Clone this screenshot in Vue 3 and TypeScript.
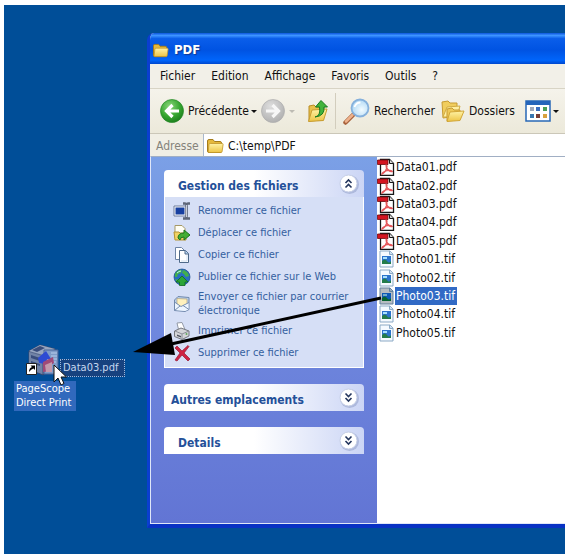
<script setup lang="ts">
import { ref } from 'vue'

interface Task { icon: string; label: string }
interface FileEntry { name: string; icon: string }

const menus: string[] = ['Fichier', 'Edition', 'Affichage', 'Favoris', 'Outils', '?']
const tasks: Task[] = [
  { icon: 'rename', label: 'Renommer ce fichier' },
  { icon: 'move', label: 'Déplacer ce fichier' },
  { icon: 'copy', label: 'Copier ce fichier' },
  { icon: 'publish', label: 'Publier ce fichier sur le Web' },
  { icon: 'mail', label: 'Envoyer ce fichier par courrier électronique' },
  { icon: 'print', label: 'Imprimer ce fichier' },
  { icon: 'delete', label: 'Supprimer ce fichier' },
]
const files: FileEntry[] = [
  ...[1, 2, 3, 4, 5].map((n) => ({ name: `Data0${n}.pdf`, icon: 'pdf' })),
  ...[1, 2, 3, 4, 5].map((n) => ({ name: `Photo0${n}.tif`, icon: 'tif' })),
]
const selected = ref('Photo03.tif')
const address = ref('C:\\temp\\PDF')
const tasksOpen = ref(true)
</script>

<template>
  <main class="page">
    <svg class="defs" aria-hidden="true">
      <defs>
        <linearGradient id="folderFill" x1="0" y1="0" x2="0" y2="1">
          <stop offset="0" stop-color="#fff3a6" /><stop offset="1" stop-color="#edc445" />
        </linearGradient>
        <radialGradient id="greenBall" cx=".4" cy=".3" r=".75">
          <stop offset="0" stop-color="#8bd67a" /><stop offset=".6" stop-color="#35a52f" /><stop offset="1" stop-color="#1a7a1c" />
        </radialGradient>
        <radialGradient id="greyBall" cx=".4" cy=".3" r=".75">
          <stop offset="0" stop-color="#dedede" /><stop offset="1" stop-color="#aeaeae" />
        </radialGradient>
        <radialGradient id="lens" cx=".6" cy=".6" r=".7">
          <stop offset="0" stop-color="#f2fbff" /><stop offset="1" stop-color="#a5d3f3" />
        </radialGradient>
      </defs>
      <symbol id="folder" viewBox="0 0 18 16">
        <path d="M1.500 3q0-1.500 1.500-1.500h4l1.500 2h5.500q1.500 0 1.500 1.500v8q0 1.500-1.500 1.500h-11q-1.500 0-1.500-1.500z" fill="#e5b93c" stroke="#a47c1b" />
        <path d="M3 6.500q.2-1 1.200-1h12q1 0 .9 1l-1 7q-.1 1-1.200 1H3.200q-1 0-1-1z" fill="url(#folderFill)" stroke="#c2962a" stroke-width=".8" />
      </symbol>
      <symbol id="back" viewBox="0 0 24 24">
        <circle cx="12" cy="12" r="11.500" fill="url(#greenBall)" stroke="#288a28" stroke-width=".7" />
        <path d="M19 12H7M12.500 6 6.500 12l6 6" fill="none" stroke="#fff" stroke-width="3.200" />
      </symbol>
      <symbol id="forward" viewBox="0 0 24 24">
        <circle cx="12" cy="12" r="11.500" fill="url(#greyBall)" stroke="#adadad" stroke-width=".7" />
        <path d="M5 12h12M11.500 6l6 6-6 6" fill="none" stroke="#f7f7f7" stroke-width="3.200" />
      </symbol>
      <symbol id="up" viewBox="0 0 22 24">
        <path d="M2 7l5-1 2 2 8 0-1 13-14 1z" fill="#e8c04c" stroke="#b98d25" />
        <path d="M1.500 22.500 5 11l15-1-3.500 11.500z" fill="url(#folderFill)" stroke="#c79c31" />
        <path d="M8 18q6-1 4.500-10H8.500L14 1.500 20.500 8H17q1 9-9 10z" fill="#42b33b" stroke="#187b20" />
      </symbol>
      <symbol id="search" viewBox="0 0 27 27">
        <path d="M2.500 24.500 10 17" stroke="#a8623c" stroke-width="4.500" stroke-linecap="round" />
        <path d="M3 23.500 9.500 17" stroke="#eeb28c" stroke-width="2.500" stroke-linecap="round" />
        <circle cx="17" cy="10" r="8.500" fill="url(#lens)" stroke="#86b1dc" stroke-width="1.800" />
        <path d="M11.500 9q1.500-4.500 6-4.500" fill="none" stroke="#fff" stroke-width="1.800" />
      </symbol>
      <symbol id="folders" viewBox="0 0 24 24">
        <path d="M1 3l6-1 2 2h7v13L2 19z" fill="#f0cd5e" stroke="#c69b32" />
        <path d="M2 18 6 8l13-1-3 11z" fill="#fff0a2" stroke="#d1ab43" />
        <path d="M6 10l5-1 2 2h6v9L6 22z" fill="#eec957" stroke="#c69b32" />
        <path d="M6 22.500 9 13l14-1-4 9.500z" fill="url(#folderFill)" stroke="#d1a638" />
      </symbol>
      <symbol id="views" viewBox="0 0 26 22">
        <rect x="1" y="1" width="24" height="20" fill="#fff" stroke="#2868b6" stroke-width="1.500" />
        <path d="M1 1h24v4H1z" fill="#2565ba" />
        <path d="M5 7h4v4H5z" fill="#a1a9bb" /><path d="M11 7h4v4h-4z" fill="#3a6ec0" /><path d="M18 7h4v4h-4z" fill="#4aa057" />
        <path d="M5 14h4v4H5z" fill="#3977b1" /><path d="M11 14h4v4h-4z" fill="#763b35" /><path d="M18 14h4v4h-4z" fill="#d8a23d" />
      </symbol>
      <symbol id="rename" viewBox="0 0 18 18">
        <path d="M1 4h13v10H1z" fill="#fff" stroke="#6f7c9c" /><path d="M2.500 5.500h9v7h-9z" fill="#173fa0" />
        <path d="M10 1.500h2q1 0 1.500 1 .5-1 1.500-1h2M13.500 2v14M10 16.500h2q1 0 1.500-1 .5 1 1.500 1h2" fill="none" stroke="#5e6678" stroke-width="2.400" />
        <path d="M13.500 3v12" stroke="#cbd0dc" />
      </symbol>
      <symbol id="move" viewBox="0 0 18 18">
        <path d="M2 1.500h7l3 3V14H2z" fill="#fffef4" stroke="#a59867" />
        <path d="M1 8h5l1 1h6v7H2z" fill="#f2d366" stroke="#b39434" />
        <path d="M5 14q0-5 6-5V6l6 5-6 5v-3q-4 0-4 3z" fill="#43ad34" stroke="#1b741e" />
      </symbol>
      <symbol id="copy" viewBox="0 0 18 18">
        <path d="M2.500 1.500h6l3 3v9h-9z" fill="#fff" stroke="#6c83a5" />
        <path d="M6.500 4.500h6l3 3v9h-9z" fill="#fff" stroke="#4e6989" />
        <path d="M12 4.500v3.500h3.500" fill="#b9d6f5" stroke="#4e6989" /><path d="M8 15h6V9" fill="none" stroke="#d2e1f2" />
      </symbol>
      <symbol id="publish" viewBox="0 0 18 18">
        <circle cx="9" cy="9" r="8" fill="#286fc2" stroke="#174a87" stroke-width=".7" />
        <path d="M2 6q3-5 7-4l-1 3-3 1-1 3-2 0zM10 2q5 1 6 6l-3 1-2-3-2-1zM2 11l4 1 2 4q-4-1-6-5z" fill="#42b04a" />
        <path d="M9 8l6 6h-3v3.500H6.500V14H3z" fill="#2ba538" stroke="#12691f" stroke-width=".8" />
        <path d="M4 5q2-2 4-2" stroke="#bbedff" fill="none" />
      </symbol>
      <symbol id="mail" viewBox="0 0 18 18">
        <path d="M1.500 5 5 1.500 16 2.500v12l-4 2-10.500-1z" fill="#b9cfea" stroke="#7289ad" />
        <path d="M4 3.500 14 4v6l-5 3-5-3z" fill="#fff1bd" stroke="#b2a17c" stroke-width=".7" />
        <path d="M2 7.500l6 4 7.500-4v7l-3.500 1.500-10-1z" fill="#edf5ff" />
        <path d="M1.500 7 8 11.500l8-4M1.500 15.500 7 11m9 3.500-6-4" fill="none" stroke="#788fb1" />
      </symbol>
      <symbol id="print" viewBox="0 0 18 18">
        <path d="M4 1l5-0.500 3 7-6 2z" fill="#fff" stroke="#9299a6" />
        <path d="M1.500 9 8 6l8 3v5l-7 3.500-7.500-3z" fill="#d4d5d9" stroke="#74777f" />
        <path d="M2 9l7 3 7-3M9 12v5" fill="none" stroke="#8d9098" /><path d="M4 12.500l4 1.500v1.500l-4-1.500z" fill="#4e5360" />
        <circle cx="13.500" cy="12" r="1" fill="#62a85e" />
      </symbol>
      <symbol id="delete" viewBox="0 0 18 18">
        <path d="M2 4 4 2l5 5 6-5.500 1 1L11 9l6 6-2 2-6-6-5 6-2-1 5-7z" fill="#cf2444" stroke="#981832" stroke-width=".7" />
      </symbol>
      <symbol id="pdf" viewBox="0 0 18 18">
        <path d="M3.500 1.500h9l4 4v12h-13z" fill="#fff" stroke="#161616" stroke-width="1.300" />
        <path d="M12.500 1.500v4h4" fill="#d9d9d9" stroke="#161616" />
        <path d="M.5 2H11v4.500H.5z" fill="#d41420" stroke="#6e080d" stroke-width=".8" />
        <path d="M9 7q1.500 0 .8 3-1 4-5 6.200 0-2 5-3.500 4-1 5.500.7-1.500 1-4-1.400Q8.500 9.500 9 7z" fill="none" stroke="#e4575b" stroke-width="1.200" />
      </symbol>
      <symbol id="tif" viewBox="0 0 18 18">
        <path d="M3 1h10l3 3v13H3z" fill="#f5faff" stroke="#8ba9c5" />
        <path d="M12.500 1v3.500H16" fill="#cfe0f1" stroke="#8ba9c5" />
        <path d="M5 6h9v8H5z" fill="#2b73cc" /><path d="M5 11q3-3 5 0t4 0v3H5z" fill="#237c4b" /><path d="M6 7h4v2H6z" fill="#a7e0ff" />
      </symbol>
      <symbol id="chevrons-up" viewBox="0 0 22 22">
        <circle cx="11.500" cy="11.500" r="9.500" fill="#8c9ac4" opacity=".5" />
        <circle cx="10.500" cy="10.500" r="8.500" fill="#fff" stroke="#c6cfe6" />
        <path d="M7.500 10 10.500 7l3 3M7.500 14.500l3-3 3 3" fill="none" stroke="#25375e" stroke-width="1.600" />
      </symbol>
      <symbol id="chevrons-down" viewBox="0 0 22 22">
        <circle cx="11.500" cy="11.500" r="9.500" fill="#8c9ac4" opacity=".5" />
        <circle cx="10.500" cy="10.500" r="8.500" fill="#fff" stroke="#c6cfe6" />
        <path d="M7.500 6.500l3 3 3-3M7.500 11l3 3 3-3" fill="none" stroke="#25375e" stroke-width="1.600" />
      </symbol>
      <symbol id="scope" viewBox="0 0 38 36">
        <path d="M3 8 14 2l15 4-1 19-11 7L3 26z" fill="#58698e" stroke="#38486e" />
        <path d="M3 8 14 2l15 4-12 6z" fill="#97a5bf" />
        <path d="M3 9l13 4v18L3 26z" fill="#7183a6" />
        <path d="M6 7 14 3l5 2-8 4zM5 12l9 3v3l-9-3zM5 18l9 3v2l-9-3z" fill="#394d7c" />
        <path d="M18 7h14v24H18z" fill="#7f9cc8" stroke="#466397" />
        <path d="M25 10h6M25 13h6M25 16h6M25 19h5" stroke="#b8cdec" />
        <path d="M12 15 20 8l5 8-4 0-1 5-7-1z" fill="#2d4bd3" />
        <path d="M17 19l10-5 1 6-5 3 1 5-7 1z" fill="#a04a78" /><path d="M19 22l7-3v10h-6z" fill="#c39aac" />
        <path d="M.5 20.500h10v11H.5z" fill="#fff" stroke="#222" />
        <path d="M3 29q0-4 3-5L4.500 22.500H9V27l-1.500-1.500Q5 26 3 29z" fill="#000" />
      </symbol>
    </svg>

    <section class="desktop">
      <a class="shortcut" href="#pagescope">
        <svg class="shortcut-icon"><use href="#scope" /></svg>
        <span class="shortcut-label">PageScope<br>Direct Print</span>
      </a>

      <section class="window" aria-label="PDF">
        <header class="titlebar">
          <svg class="small-icon"><use href="#folder" /></svg>
          <h1>PDF</h1>
        </header>
        <nav class="menubar">
          <button v-for="menu in menus" :key="menu" type="button">{{ menu }}</button>
        </nav>
        <div class="toolbar">
          <button type="button" class="tool previous">
            <svg class="ball"><use href="#back" /></svg>Précédente<i class="caret" />
          </button>
          <button type="button" class="tool next" aria-label="Suivante">
            <svg class="ball"><use href="#forward" /></svg><i class="caret muted" />
          </button>
          <button type="button" class="tool" aria-label="Dossier parent">
            <svg class="up"><use href="#up" /></svg>
          </button>
          <span class="separator" />
          <button type="button" class="tool"><svg class="search"><use href="#search" /></svg>Rechercher</button>
          <button type="button" class="tool folders"><svg class="ball"><use href="#folders" /></svg>Dossiers</button>
          <button type="button" class="tool view-mode" aria-label="Affichage">
            <svg class="views"><use href="#views" /></svg><i class="caret" />
          </button>
        </div>
        <div class="addressbar">
          <label for="address">Adresse</label>
          <div class="address-field">
            <svg class="address-icon"><use href="#folder" /></svg>
            <input id="address" v-model="address" type="text">
          </div>
        </div>
        <div class="content">
          <aside class="sidebar">
            <section class="panel">
              <header class="panel-head indented">
                <h2>Gestion des fichiers</h2>
                <button type="button" aria-label="Gestion des fichiers" :aria-expanded="tasksOpen" @click="tasksOpen = !tasksOpen">
                  <svg><use :href="tasksOpen ? '#chevrons-up' : '#chevrons-down'" /></svg>
                </button>
              </header>
              <ul v-if="tasksOpen" class="tasks">
                <li v-for="task in tasks" :key="task.icon">
                  <a href="#tasks"><svg><use :href="'#' + task.icon" /></svg><span>{{ task.label }}</span></a>
                </li>
              </ul>
            </section>
            <section class="panel">
              <header class="panel-head">
                <h2>Autres emplacements</h2>
                <button type="button" aria-label="Autres emplacements"><svg><use href="#chevrons-down" /></svg></button>
              </header>
            </section>
            <section class="panel">
              <header class="panel-head indented">
                <h2>Details</h2>
                <button type="button" aria-label="Details"><svg><use href="#chevrons-down" /></svg></button>
              </header>
            </section>
          </aside>
          <ul class="files">
            <li v-for="file in files" :key="file.name">
              <button type="button" :class="{ selected: file.name === selected }" @click="selected = file.name">
                <svg><use :href="'#' + file.icon" /></svg><span>{{ file.name }}</span>
              </button>
            </li>
          </ul>
        </div>
      </section>

      <span class="drag-label">Data03.pdf</span>
      <svg class="pointer" viewBox="0 0 14 22" aria-hidden="true">
        <path d="M1 1v17l4-4 3 7 3-1.500-3-6.500h5.500z" fill="#fff" stroke="#111" />
      </svg>
      <svg class="arrow" viewBox="0 0 250 60" aria-hidden="true">
        <path d="M248 3 38 49" stroke="#000" stroke-width="3" />
        <path d="M0 57 38 38l4 22z" fill="#000" />
      </svg>
    </section>
  </main>
</template>

<style>
body { margin: 0; background: #fff; }
</style>

<style scoped>
* { box-sizing: border-box; }
.page {
  display: flex;
  min-height: 100vh;
  padding: 5px 5px 3px 4px;
  font: 12px/14px "DejaVu Sans Condensed", "DejaVu Sans", sans-serif;
  color: #111;
}
.defs { position: absolute; width: 0; height: 0; }
button { padding: 0; border: 0; background: none; font: inherit; color: inherit; }
a { color: inherit; text-decoration: none; }
ul { margin: 0; padding: 0; list-style: none; }
h1, h2 { margin: 0; }
svg { flex: none; display: block; }
.desktop { position: relative; flex: 1; overflow: hidden; background: #004e98; }
.window {
  display: flex;
  flex-direction: column;
  height: calc(100% - 54px);
  margin: 28px 0 26px 143px;
  border-left: 3px solid #0b3ed0;
  border-bottom: 4px solid #0831c4;
  border-radius: 7px 0 0 0;
  background: #f1efe4;
  overflow: hidden;
}
.titlebar {
  display: flex;
  align-items: center;
  gap: 5px;
  height: 31px;
  padding: 3px 0 0 2px;
  background: linear-gradient(#0b55dc, #3d94ff 8%, #0a5eea 18%, #0053e2 55%, #0065fb 88%, #0047ce);
  color: #fff;
}
.titlebar h1 { font: bold 13px/16px "DejaVu Sans Condensed", sans-serif; text-shadow: 1px 1px 1px #123a91; }
.small-icon { width: 17px; height: 15px; }
.menubar {
  display: flex;
  gap: 16px;
  height: 25px;
  padding-left: 10px;
  background: #f2f0e8;
  border-bottom: 1px solid #d8d4c5;
}
.toolbar {
  display: flex;
  align-items: center;
  height: 45px;
  padding-left: 10px;
  background: linear-gradient(#f5f3eb, #ece9da);
  border-bottom: 1px solid #cbc7b8;
}
.tool { display: flex; align-items: center; gap: 4px; }
.previous { gap: 4px; }
.previous .caret { margin-left: -2px; }
.next { margin: 0 12px 0 4px; }
.ball { width: 24px; height: 24px; }
.up { width: 22px; height: 24px; }
.search { width: 27px; height: 27px; }
.views { width: 26px; height: 22px; }
.folders { margin: 0 10px 0 6px; }
.view-mode { gap: 2px; }
.caret { border: 3px solid transparent; border-top-color: #111; border-bottom: 0; }
.caret.muted { border-top-color: #bdbbb3; }
.separator { width: 1px; height: 36px; margin: 0 7px 0 6px; background: #d2cdbd; }
.addressbar { display: flex; height: 22px; background: #f1efe5; }
.addressbar label { width: 53px; padding: 5px 0 0 6px; color: #85837b; }
.address-field {
  display: flex;
  flex: 1;
  align-items: center;
  gap: 4px;
  min-width: 0;
  padding: 1px 0 0 2px;
  border-left: 1px solid #a9b8cc;
  background: #fff;
}
.address-icon { width: 18px; height: 16px; }
.address-field input { flex: 1; min-width: 0; padding: 0; border: 0; outline: 0; background: none; font: inherit; color: inherit; }
.content { display: flex; flex: 1; border: solid #dfe7f8; border-width: 1px 0 1px 1px; border-top-color: #a1afc4; background: #fff; }
.sidebar {
  display: flex;
  flex-direction: column;
  gap: 16px;
  width: 226px;
  padding: 13px 13px 0;
  background: linear-gradient(#7ba0e6, #6e86dd 50%, #6275d4);
}
.panel-head {
  display: flex;
  align-items: center;
  justify-content: space-between;
  height: 27px;
  padding: 0 4px 0 7px;
  border-radius: 4px 4px 0 0;
  background: linear-gradient(90deg, #fff 45%, #cbd5f5);
  color: #245099;
}
.panel-head.indented { padding-left: 14px; }
.panel-head h2 { padding-top: 5px; font: bold 12px/15px "DejaVu Sans Condensed", sans-serif; }
.panel-head svg { width: 22px; height: 22px; }
.tasks {
  display: flex;
  flex-direction: column;
  gap: 4px;
  padding: 5px 4px 5px 8px;
  border: 1px solid #fff;
  border-top: 0;
  background: #d6dff6;
  color: #34609f;
  font-size: 11px;
}
.tasks a { display: flex; align-items: center; gap: 7px; min-height: 18px; }
.tasks svg { width: 18px; height: 18px; }
.files { display: grid; grid-auto-rows: 1fr; height: 185px; width: 100px; padding-top: 1px; }
.files button { display: flex; align-items: center; height: 100%; }
.files svg { width: 18px; height: 18px; }
.files span { padding: 2px 2px 2px 1px; }
.files .selected span { background: #316ac5; color: #fff; }
.files .selected svg { filter: brightness(.75) saturate(1.4); }
.shortcut { position: absolute; left: 10px; top: 338px; display: flex; flex-direction: column; gap: 2px; width: 62px; color: #fff; font-size: 11px; }
.shortcut-icon { width: 38px; height: 36px; margin-left: 12px; }
.shortcut-label { padding: 1px 2px; background: #3169bd; line-height: 14px; white-space: nowrap; }
.drag-label { position: absolute; left: 56px; top: 354px; padding: 1px 6px 1px 2px; border: 1px dotted #9fb9dc; background: #17427f; color: #c5d7f0; font-size: 11px; }
.pointer { position: absolute; left: 49px; top: 359px; width: 14px; height: 22px; }
.arrow { position: absolute; left: 129px; top: 290px; width: 250px; height: 60px; }
</style>
